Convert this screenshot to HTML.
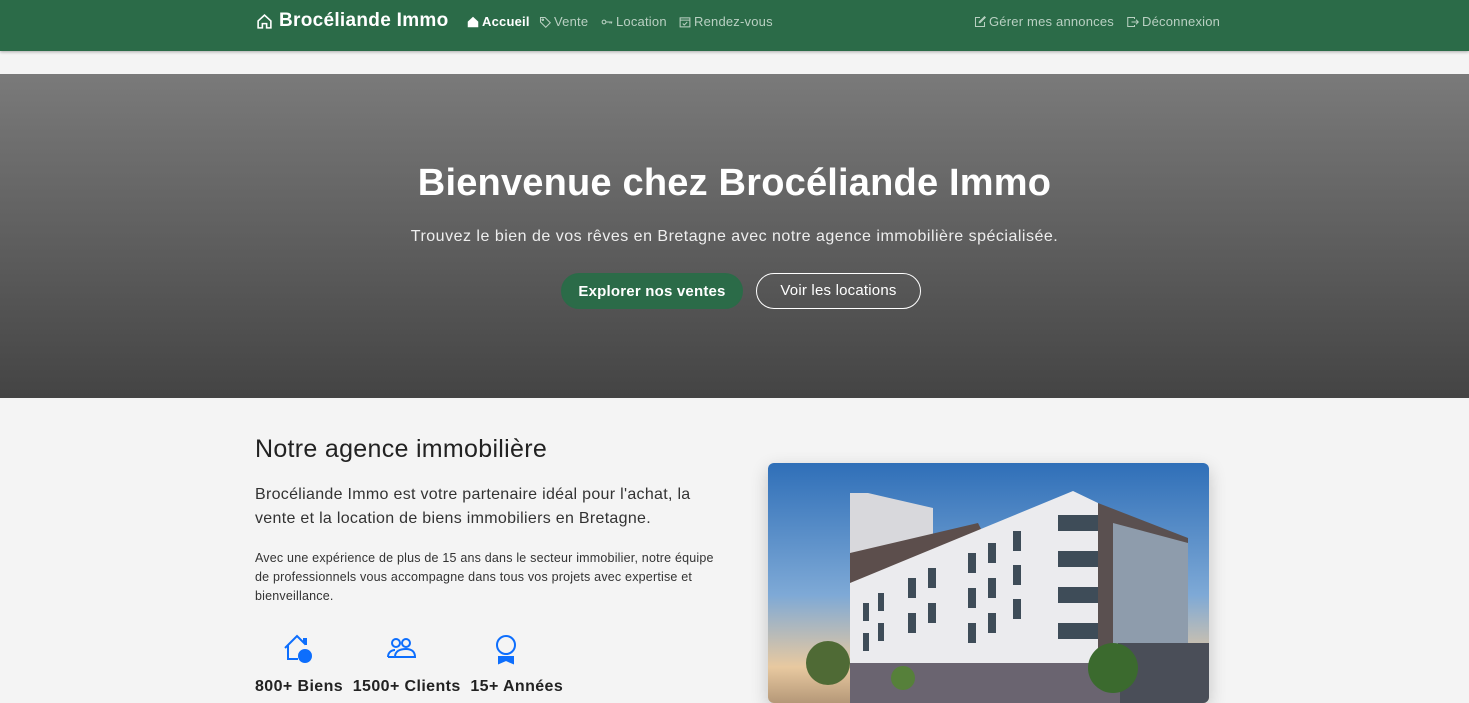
<!DOCTYPE html>
<html><head><meta charset="utf-8"><style>
*{margin:0;padding:0;box-sizing:border-box}
body{width:1469px;height:684px;overflow:hidden;background:#f4f4f4;font-family:"Liberation Sans",sans-serif;color:#222}
nav{position:absolute;top:0;left:0;width:1469px;height:51px;background:#2b6b48;box-shadow:0 1px 3px rgba(0,0,0,.3)}
.brand{position:absolute;left:256px;top:10px;color:#fff;font-weight:bold;font-size:19px;display:flex;align-items:center;gap:6px;letter-spacing:0.3px}
.nl{position:absolute;top:14px;font-size:13px;color:#b9d0c2;display:flex;align-items:center;gap:3px;letter-spacing:0.2px}
.nl svg{width:12px;height:12px}
.hero{position:absolute;top:74px;left:0;width:1469px;height:324px;background:linear-gradient(#7a7a7a,#444);text-align:center;color:#fff}
.hero h1{position:absolute;top:88px;width:100%;font-size:38px;font-weight:bold;letter-spacing:0.2px}
.hero p{position:absolute;top:154px;width:100%;font-size:16px;color:#eee;letter-spacing:0.5px}
.btn{position:absolute;top:199px;height:36px;border-radius:18px;font-size:15px;line-height:34px;font-weight:bold;text-align:center;letter-spacing:0.2px}
h2{position:absolute;left:255px;top:435px;font-size:25px;font-weight:normal;color:#222;letter-spacing:0.3px}
.lead{position:absolute;left:255px;top:483px;width:450px;font-size:16px;line-height:24px;color:#333;letter-spacing:0.3px}
.small{position:absolute;left:255px;top:549px;width:474px;font-size:12.5px;line-height:19px;color:#333;letter-spacing:0.2px}
.ic{position:absolute;top:633px}
.imgbox{position:absolute;left:768px;top:463px;width:441px;height:240px;border-radius:6px;overflow:hidden;box-shadow:0 6px 18px rgba(0,0,0,.2)}
</style></head><body>
<nav>
<div class="brand"><svg width="17" height="17" viewBox="0 0 16 16" fill="none" stroke="#fff" stroke-width="1.5"><path d="M2 7.5L8 2l6 5.5V14H10v-4H6v4H2z"/></svg>Brocéliande Immo</div>
<div class="nl" style="left:467px;color:#fff;font-weight:bold"><svg viewBox="0 0 16 16" fill="#fff"><path d="M8 1l7 6.5V15H1V7.5z"/></svg>Accueil</div>
<div class="nl" style="left:539px"><svg viewBox="0 0 16 16" fill="none" stroke="#b9d0c2" stroke-width="1.4"><path d="M2 2h6l7 7-6 6-7-7z"/><circle cx="5" cy="5" r="1"/></svg>Vente</div>
<div class="nl" style="left:601px"><svg viewBox="0 0 16 16" fill="none" stroke="#b9d0c2" stroke-width="1.4"><circle cx="4" cy="8" r="2.5"/><path d="M6.5 8H15M12 8v2M14 8v2"/></svg>Location</div>
<div class="nl" style="left:679px"><svg viewBox="0 0 16 16" fill="none" stroke="#b9d0c2" stroke-width="1.4"><rect x="1.5" y="2.5" width="13" height="12"/><path d="M1.5 5.5h13M5 10l2 2 4-4"/></svg>Rendez-vous</div>
<div class="nl" style="left:974px"><svg viewBox="0 0 16 16" fill="none" stroke="#b9d0c2" stroke-width="1.4"><path d="M8 2H2v12h12V8M7 9l1 0 7-7-1-1-7 7z"/></svg>Gérer mes annonces</div>
<div class="nl" style="left:1127px"><svg viewBox="0 0 16 16" fill="none" stroke="#b9d0c2" stroke-width="1.4"><path d="M10 4V2H1v12h9v-2M6 8h9M12 5l3 3-3 3"/></svg>Déconnexion</div>
</nav>
<div class="hero">
<h1>Bienvenue chez Brocéliande Immo</h1>
<p>Trouvez le bien de vos rêves en Bretagne avec notre agence immobilière spécialisée.</p>
<div class="btn" style="left:561px;width:182px;background:#2b6b48;border:1px solid #2b6b48;line-height:36px">Explorer nos ventes</div>
<div class="btn" style="left:756px;width:165px;border:1px solid #fff;font-weight:normal">Voir les locations</div>
</div>
<h2>Notre agence immobilière</h2>
<div class="lead">Brocéliande Immo est votre partenaire idéal pour l'achat, la vente et la location de biens immobiliers en Bretagne.</div>
<div class="small">Avec une expérience de plus de 15 ans dans le secteur immobilier, notre équipe de professionnels vous accompagne dans tous vos projets avec expertise et bienveillance.</div>
<svg class="ic" style="left:282px" width="32" height="32" viewBox="0 0 32 32" fill="none" stroke="#0d6efd" stroke-width="2"><path d="M3 15L15 3l7 7V6h2v6M6 12v14h10"/><circle cx="23" cy="23" r="6" fill="#0d6efd"/></svg>
<svg class="ic" style="left:385px" width="32" height="32" viewBox="0 0 32 32" fill="none" stroke="#0d6efd" stroke-width="2"><circle cx="11" cy="10" r="4"/><circle cx="21" cy="10" r="4"/><path d="M3 24c0-5 4-7 7-7M10 24c0-6 5-8 11-8s9 3 9 8z"/><path d="M3 24h6"/></svg>
<svg class="ic" style="left:490px" width="32" height="32" viewBox="0 0 32 32" fill="none" stroke="#0d6efd" stroke-width="2"><circle cx="16" cy="12" r="9"/><path d="M9 23v7l7-3 7 3v-7" fill="#0d6efd"/></svg>
<div style="position:absolute;left:255px;top:678px;font-size:16px;font-weight:bold;color:#222;letter-spacing:0.4px">800+ Biens &nbsp;1500+ Clients &nbsp;15+ Années</div>
<div class="imgbox"><svg width="441" height="240" viewBox="0 0 441 240">
<defs><linearGradient id="s" x1="0" y1="0" x2="0" y2="1"><stop offset="0" stop-color="#2f6fb8"/><stop offset=".55" stop-color="#7ea9d6"/><stop offset=".85" stop-color="#e8c9a0"/><stop offset="1" stop-color="#b59878"/></linearGradient></defs>
<rect width="441" height="240" fill="url(#s)"/>
<polygon points="82,30 100,30 165,45 165,80 82,110" fill="#d8d8dc"/>
<polygon points="82,90 210,60 220,80 82,140" fill="#5c4e4c"/>
<polygon points="82,120 305,28 330,40 330,240 82,240" fill="#ebebee"/>
<polygon points="330,40 420,75 420,240 330,240" fill="#5a5050"/>
<polygon points="345,60 420,80 420,200 345,190" fill="#8e9cac"/>
<rect x="350" y="180" width="91" height="60" fill="#4a4e58"/>
<rect x="82" y="200" width="270" height="40" fill="#6a6470"/>
<g fill="#3e4c58"><rect x="290" y="52" width="40" height="16"/><rect x="290" y="88" width="40" height="16"/><rect x="290" y="124" width="40" height="16"/><rect x="290" y="160" width="40" height="16"/>
<rect x="245" y="68" width="8" height="20"/><rect x="245" y="102" width="8" height="20"/><rect x="245" y="136" width="8" height="20"/><rect x="220" y="80" width="8" height="20"/><rect x="220" y="115" width="8" height="20"/><rect x="220" y="150" width="8" height="20"/><rect x="200" y="90" width="8" height="20"/><rect x="200" y="125" width="8" height="20"/><rect x="200" y="160" width="8" height="20"/><rect x="160" y="105" width="8" height="20"/><rect x="160" y="140" width="8" height="20"/><rect x="140" y="115" width="8" height="20"/><rect x="140" y="150" width="8" height="20"/><rect x="110" y="130" width="6" height="18"/><rect x="110" y="160" width="6" height="18"/><rect x="95" y="140" width="6" height="18"/><rect x="95" y="170" width="6" height="18"/></g>
<circle cx="345" cy="205" r="25" fill="#3b6a2e"/><circle cx="60" cy="200" r="22" fill="#4f6a35"/><circle cx="135" cy="215" r="12" fill="#56803a"/>
</svg></div>
</body></html>
